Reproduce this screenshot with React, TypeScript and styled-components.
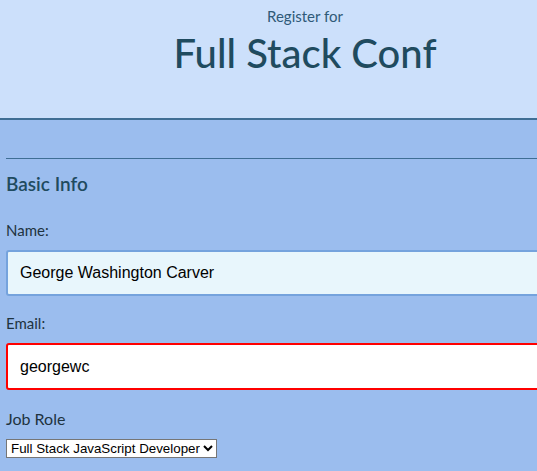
import React from "react";
import styled, { createGlobalStyle } from "styled-components";

const Global = createGlobalStyle`
  html, body { margin: 0; padding: 0; overflow: hidden; }
  body { background: #9bbdee; font-family: "Lato", "Noto Sans", sans-serif; }
`;

const Page = styled.div`
  width: 610px;
  min-height: 471px;
  background: #9bbdee;
`;

const Header = styled.header`
  height: 120px;
  background: #cce0fb;
  border-bottom: 2px solid #3f6e94;
  display: flex;
  flex-direction: column;
  align-items: center;
  padding-top: 7px;
  box-sizing: border-box;
  color: #1f4b5f;
`;

const Kicker = styled.div`
  font-size: 15px;
  line-height: 18px;
  color: #2f5a78;
`;

const Title = styled.h1`
  margin: 4px 0 0;
  font-size: 40px;
  line-height: 48px;
  font-weight: 500;
  color: #1f4b5f;
`;

const Form = styled.form`
  padding: 38px 0 0 6px;
  display: flex;
  flex-direction: column;
`;

const Rule = styled.hr`
  margin: 0;
  border: none;
  border-top: 1px solid #3f6e94;
  height: 0;
`;

const SectionTitle = styled.h2`
  margin: 14px 0 0;
  font-size: 19px;
  line-height: 22px;
  font-weight: 600;
  color: #1f4b5f;
`;

const Label = styled.label<{ $gap?: number }>`
  margin-top: ${(p) => p.$gap ?? 25}px;
  font-size: 15px;
  line-height: 18px;
  color: #1e3340;
`;

const Input = styled.input<{ $invalid?: boolean }>`
  margin-top: 11px;
  width: 100%;
  height: ${(p) => (p.$invalid ? 47 : 46)}px;
  box-sizing: border-box;
  border: 2px solid ${(p) => (p.$invalid ? "#ff0000" : "#75a3dd")};
  border-radius: 3px;
  background: ${(p) => (p.$invalid ? "#ffffff" : "#e8f6fc")};
  padding: 0 12px;
  font-family: "Liberation Sans", Arial, sans-serif;
  font-size: 16px;
  color: #000;
  outline: none;
`;

const RoleLabel = styled(Label)`
  font-size: 16px;
`;

const Select = styled.select`
  margin-top: 11px;
  align-self: flex-start;
  font-family: "Liberation Sans", Arial, sans-serif;
  font-size: 13.33px;
  height: 19px;
  border: 1px solid #767676;
  border-radius: 0;
  background: #fff;
  color: #000;
`;

export default function App() {
  return (
    <Page>
      <Global />
      <Header>
        <Kicker>Register for</Kicker>
        <Title>Full Stack Conf</Title>
      </Header>
      <Form>
        <Rule />
        <SectionTitle>Basic Info</SectionTitle>
        <Label htmlFor="name" $gap={26}>Name:</Label>
        <Input id="name" defaultValue="George Washington Carver" />
        <Label htmlFor="email" $gap={18}>Email:</Label>
        <Input id="email" $invalid defaultValue="georgewc" />
        <RoleLabel htmlFor="role" $gap={20}>Job Role</RoleLabel>
        <Select id="role" defaultValue="fsjs">
          <option value="fsjs">Full Stack JavaScript Developer</option>
        </Select>
      </Form>
    </Page>
  );
}
